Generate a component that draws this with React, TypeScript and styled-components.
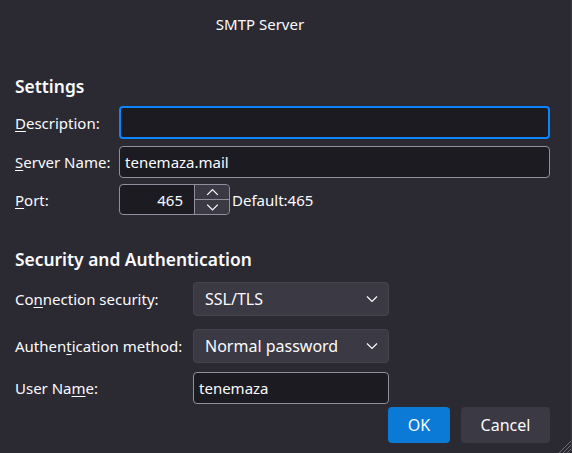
import React from "react";
import styled, { createGlobalStyle } from "styled-components";

const Global = createGlobalStyle`
  html, body { margin: 0; padding: 0; background: #2b2a33; }
  body { font-family: "Noto Sans", "Open Sans", sans-serif; color: #fbfbfe; }
  * { box-sizing: border-box; }
`;

const Dialog = styled.div`
  position: relative;
  width: 572px;
  height: 453px;
  background: #2b2a33;
  border-right: 1px solid #3a3944;
  display: flex;
  flex-direction: column;
  padding: 0 21px 0 15px;
  font-size: 15px;
  overflow: hidden;
`;

const Title = styled.div`
  height: 48px;
  display: flex;
  align-items: center;
  justify-content: center;
  font-size: 15px;
  padding-right: 45px;
`;

const Heading = styled.div<{ $top: number }>`
  margin-top: ${(p) => p.$top}px;
  font-size: 17.4px;
  font-weight: 600;
  line-height: 22px;
`;

const Grid = styled.div<{ $label: number; $top: number }>`
  margin-top: ${(p) => p.$top}px;
  display: grid;
  grid-template-columns: ${(p) => p.$label}px 1fr;
  align-items: center;
`;

const Label = styled.label<{ $mt?: number }>`
  margin-top: ${(p) => p.$mt ?? 0}px;
  white-space: nowrap;
  font-size: 15px;
`;

const Key = styled.span`
  text-decoration: underline;
  text-underline-offset: 2px;
`;

const Cell = styled.div<{ $mt?: number }>`
  margin-top: ${(p) => p.$mt ?? 0}px;
  display: flex;
  align-items: center;
`;

const TextBox = styled.div<{ $focus?: boolean; $h: number; $w?: number }>`
  height: ${(p) => p.$h}px;
  width: ${(p) => (p.$w ? `${p.$w}px` : "100%")};
  border: ${(p) => (p.$focus ? "2px solid #0a84ff" : "1px solid #8f8f9d")};
  border-radius: 4px;
  background: #1c1b22;
  display: flex;
  align-items: center;
  padding: 0 5px;
  font-size: 15px;
`;

const Spin = styled.div`
  height: 31px;
  width: 111px;
  border: 1px solid #8f8f9d;
  border-radius: 4px;
  background: #1c1b22;
  display: flex;
  overflow: hidden;
`;

const SpinValue = styled.div`
  flex: 1;
  display: flex;
  align-items: center;
  justify-content: flex-end;
  padding-right: 11px;
  font-size: 15px;
`;

const SpinButtons = styled.div`
  width: 35px;
  display: flex;
  flex-direction: column;
  border-left: 1px solid #8f8f9d;
  gap: 1px;
  background: #8f8f9d;
`;

const SpinBtn = styled.div`
  flex: 1;
  background: #3a3944;
  display: flex;
  align-items: center;
  justify-content: center;
`;

const Hint = styled.span`
  margin-left: 2px;
  font-size: 15px;
`;

const Select = styled.div`
  height: 34px;
  width: 196px;
  background: #3a3944;
  border: 1px solid #46454f;
  border-radius: 4px;
  display: flex;
  align-items: center;
  justify-content: space-between;
  padding: 0 10px 0 11px;
  font-size: 16px;
`;

const Buttons = styled.div`
  margin-top: 3px;
  display: flex;
  justify-content: flex-end;
  gap: 11px;
`;

const Button = styled.button<{ $primary?: boolean; $w: number }>`
  height: 36px;
  width: ${(p) => p.$w}px;
  border: none;
  border-radius: 4px;
  background: ${(p) => (p.$primary ? "#0a7ad6" : "#3a3944")};
  color: #fbfbfe;
  font-family: inherit;
  font-size: 16px;
`;

const Grip = styled.svg`
  position: absolute;
  right: 0;
  bottom: 0;
`;

const Chevron = ({ up, size = 12 }: { up?: boolean; size?: number }) => (
  <svg width={size} height={size / 2 + 2} viewBox="0 0 12 8">
    <path
      d={up ? "M1 6.5 L6 1.5 L11 6.5" : "M1 1.5 L6 6.5 L11 1.5"}
      fill="none"
      stroke="#fbfbfe"
      strokeWidth="1.2"
    />
  </svg>
);

export default function App() {
  return (
    <>
      <Global />
      <Dialog>
        <Title>SMTP Server</Title>
        <Heading $top={27}>Settings</Heading>
        <Grid $label={104} $top={9}>
          <Label>
            <Key>D</Key>escription:
          </Label>
          <Cell>
            <TextBox $focus $h={33} />
          </Cell>
          <Label $mt={7}>
            <Key>S</Key>erver Name:
          </Label>
          <Cell $mt={7}>
            <TextBox $h={32}>tenemaza.mail</TextBox>
          </Cell>
          <Label $mt={6}>
            <Key>P</Key>ort:
          </Label>
          <Cell $mt={6}>
            <Spin>
              <SpinValue>465</SpinValue>
              <SpinButtons>
                <SpinBtn>
                  <Chevron up size={13} />
                </SpinBtn>
                <SpinBtn>
                  <Chevron size={13} />
                </SpinBtn>
              </SpinButtons>
            </Spin>
            <Hint>Default:465</Hint>
          </Cell>
        </Grid>
        <Heading $top={33}>Security and Authentication</Heading>
        <Grid $label={178} $top={12}>
          <Label>
            Co<Key>n</Key>nection security:
          </Label>
          <Cell>
            <Select>
              SSL/TLS
              <Chevron />
            </Select>
          </Cell>
          <Label $mt={13}>
            Authen<Key>t</Key>ication method:
          </Label>
          <Cell $mt={13}>
            <Select>
              Normal password
              <Chevron />
            </Select>
          </Cell>
          <Label $mt={9}>
            User Na<Key>m</Key>e:
          </Label>
          <Cell $mt={9}>
            <TextBox $h={32} $w={196}>
              tenemaza
            </TextBox>
          </Cell>
        </Grid>
        <Buttons>
          <Button $primary $w={62}>
            OK
          </Button>
          <Button $w={89}>Cancel</Button>
        </Buttons>
        <Grip width="16" height="16" viewBox="0 0 16 16">
          <path d="M16 4 L4 16 M16 8 L8 16 M16 12 L12 16" stroke="#6b6a73" strokeWidth="1" />
        </Grip>
      </Dialog>
    </>
  );
}
